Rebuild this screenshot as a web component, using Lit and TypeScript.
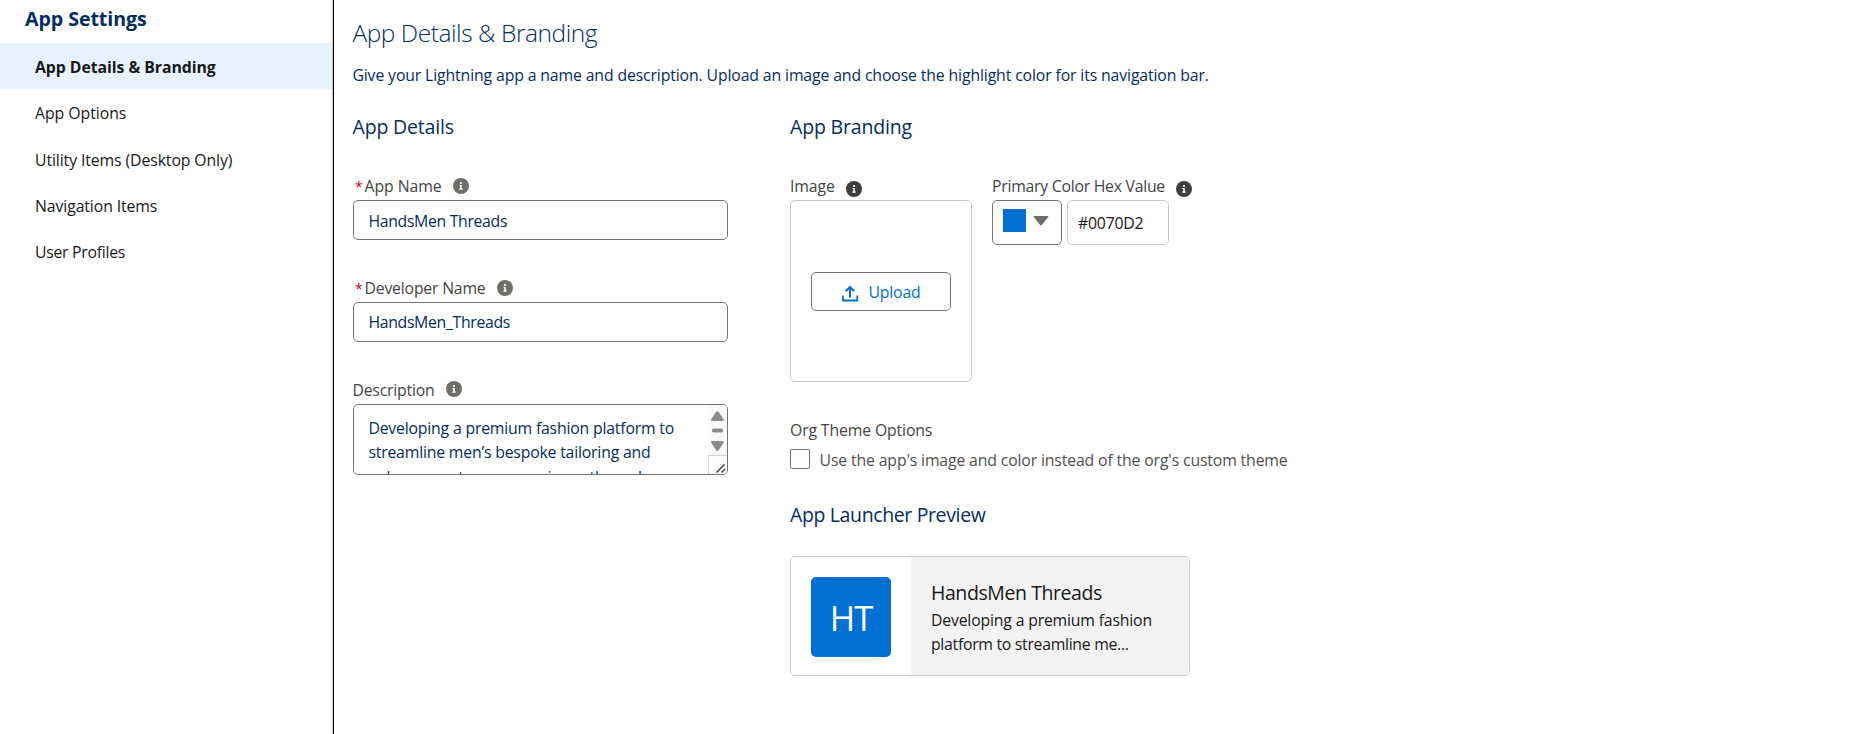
import { LitElement, html, css } from "lit";
import { customElement, property, state } from "lit/decorators.js";
import { classMap } from "lit/directives/class-map.js";

@customElement("info-icon")
class InfoIcon extends LitElement {
  static styles = css`
    :host { display: block; width: 16px; height: 16px; color: #706e6b; }
    svg { display: block; width: 16px; height: 16px; }
  `;
  render() {
    return html`<svg viewBox="0 0 16 16">
      <circle cx="8" cy="8" r="8" fill="currentColor"></circle>
      <circle cx="8" cy="5" r="1.1" fill="#fff"></circle>
      <path d="M6.4 7h2.400v3.600h.9v1.100H6.300v-1.100h.9V8h-.8z" fill="#fff"></path>
    </svg>`;
  }
}

@customElement("settings-nav")
class SettingsNav extends LitElement {
  @property({ type: Number }) active = 0;

  private items = [
    { label: "App Details & Branding", fit: "" },
    { label: "App Options", fit: "" },
    { label: "Utility Items (Desktop Only)", fit: "snug" },
    { label: "Navigation Items", fit: "snug" },
    { label: "User Profiles", fit: "tight" },
  ];

  static styles = css`
    :host { display: block; }
    h1 {
      margin: 0; height: 43px; padding-left: 25px; box-sizing: border-box;
      font-size: 19.6px; line-height: 38px; font-weight: 700; letter-spacing: -0.06px; color: #032d60;
    }
    ul { list-style: none; margin: 0; padding: 0; }
    li {
      height: 46.25px; line-height: 49px; padding-left: 35px;
      font-size: 15.8px; letter-spacing: -0.04px; color: #181818; white-space: nowrap;
    }
    .snug { letter-spacing: -0.1px; }
    .tight { letter-spacing: -0.28px; }
    .active { background: #e6f3fe; font-weight: 700; letter-spacing: -0.05px; }
  `;
  render() {
    return html`
      <h1>App Settings</h1>
      <ul>
        ${this.items.map((it, i) => html`
          <li class=${classMap({ active: i === this.active, snug: it.fit === "snug", tight: it.fit === "tight" })}>${it.label}</li>`)}
      </ul>`;
  }
}

@customElement("details-form")
class DetailsForm extends LitElement {
  static styles = css`
    :host { display: block; width: 375px; }
    .label {
      display: flex; height: 25px; line-height: 23px; color: #444; letter-spacing: -0.2px; white-space: nowrap;
    }
    .label.wide { letter-spacing: -0.07px; }
    .req { width: 11.5px; padding-left: 2px; box-sizing: border-box; color: #c2001b; font-size: 14px; }
    info-icon { margin: 3px 0 0 11.5px; }
    .label.desc { text-indent: -0.6px; }
    .label.desc info-icon { margin: 2px 0 0 11px; }
    .field {
      height: 40px; box-sizing: border-box; border: 1px solid #747474; border-radius: 5px;
      padding-left: 14.4px; line-height: 41px; color: #032d60; letter-spacing: -0.32px;
      margin-bottom: 37px;
    }
    .field.dev { line-height: 38px; }
    .area {
      display: flex; justify-content: space-between; height: 71px; box-sizing: border-box;
      border: 1px solid #747474; border-radius: 5px; overflow: hidden;
    }
    .copy {
      padding: 11px 0 0 14.4px; line-height: 24.375px; color: #032d60; letter-spacing: -0.19px; white-space: nowrap;
    }
    .copy div { height: 24.375px; }
    .bar { width: 19px; background: #fafafa; }
    .bar svg { display: block; width: 19px; height: 69px; }
  `;
  render() {
    return html`
      <div class="label wide"><span class="req">*</span>App Name<info-icon></info-icon></div>
      <div class="field">HandsMen Threads</div>
      <div class="label"><span class="req">*</span>Developer Name<info-icon></info-icon></div>
      <div class="field dev">HandsMen_Threads</div>
      <div class="label desc">Description<info-icon></info-icon></div>
      <div class="area">
        <div class="copy">
          <div>Developing a premium fashion platform to</div>
          <div>streamline men’s bespoke tailoring and</div>
          <div>enhance customer experience through</div>
        </div>
        <div class="bar">
          <svg viewBox="0 0 19 69">
            <path d="M8.200 6.800a1.700 1.700 0 0 1 2.400 0l5 7.400q.8 1.600-.8 1.800H4q-1.600-.2-.8-1.800z" fill="#8b8b8b"></path>
            <rect x="4" y="23.500" width="11" height="4" rx="1.800" fill="#8b8b8b"></rect>
            <path d="M8.200 45.200a1.700 1.700 0 0 0 2.400 0l5-7.400q.8-1.600-.8-1.800H4q-1.600.2-.8 1.800z" fill="#8b8b8b"></path>
            <path d="M.5 69V50.500H19" fill="#fff" stroke="#d0d0d0"></path>
            <path d="M8.500 67.500l8-8M13.500 67.500l3.500-3.500" stroke="#444" stroke-width="1.600" fill="none"></path>
          </svg>
        </div>
      </div>`;
  }
}

@customElement("branding-form")
class BrandingForm extends LitElement {
  @property() color = "#0070D2";

  static styles = css`
    :host { display: block; }
    .pair { display: flex; gap: 20px; }
    .label { display: flex; height: 25px; line-height: 23px; color: #444; letter-spacing: -0.1px; white-space: nowrap; }
    .label.tight { letter-spacing: -0.26px; }
    info-icon { color: #3e3e3c; margin: 5.5px 0 0 11px; }
    .drop {
      width: 182px; height: 182px; box-sizing: border-box; border: 1px solid #c9c9c9; border-radius: 5px;
      display: flex; align-items: center; justify-content: center;
    }
    .upload {
      width: 140px; height: 39px; box-sizing: border-box; border: 1px solid #747474; border-radius: 5px;
      display: flex; align-items: center; justify-content: center; gap: 10px; color: #0070d2; letter-spacing: -0.19px;
    }
    .upload svg { width: 17px; height: 17px; display: block; margin-top: 5px; }
    .upload span { padding-top: 2px; }
    .picker { display: flex; gap: 5px; }
    .swatch-btn {
      width: 70px; height: 45px; box-sizing: border-box; border: 1px solid #747474; border-radius: 5px;
      display: flex; padding: 8px 0 0 10px;
    }
    .swatch { width: 23px; height: 23px; }
    .arrow { width: 16px; height: 10px; margin: 7px 0 0 7px; }
    .hex {
      width: 102px; height: 45px; box-sizing: border-box; border: 1px solid #c9c9c9; border-radius: 5px;
      padding-left: 10px; line-height: 45px; color: #181818; letter-spacing: -0.2px;
    }
    .theme { margin-top: 35px; height: 32px; line-height: 26px; color: #444; letter-spacing: -0.14px; }
    .check { display: flex; height: 20px; gap: 9.6px; color: #514f4d; letter-spacing: -0.147px; line-height: 23px; white-space: nowrap; }
    .box { width: 20px; height: 20px; box-sizing: border-box; border: 1px solid #747474; border-radius: 2px; }
  `;
  render() {
    return html`
      <div class="pair">
        <div>
          <div class="label">Image<info-icon></info-icon></div>
          <div class="drop">
            <div class="upload">
              <svg viewBox="0 0 17 17" fill="none" stroke="currentColor">
                <path d="M8 12.500V2.500M3.800 6.200L8 2l4.200 4.200" stroke-width="2"></path>
                <path d="M1 10.500v5h14.300v-5" stroke-width="1.800"></path>
              </svg>
              <span>Upload</span>
            </div>
          </div>
        </div>
        <div>
          <div class="label tight">Primary Color Hex Value<info-icon></info-icon></div>
          <div class="picker">
            <div class="swatch-btn">
              <div class="swatch" style="background:${this.color}"></div>
              <svg class="arrow" viewBox="0 0 16 10"><path d="M1.200 0h13.600q1 .2.4 1.100L8.700 9.200q-.7.7-1.400 0L.8 1.100Q.2.2 1.200 0z" fill="#706e6b"></path></svg>
            </div>
            <div class="hex">${this.color}</div>
          </div>
        </div>
      </div>
      <div class="theme">Org Theme Options</div>
      <div class="check"><span class="box"></span><span>Use the app's image and color instead of the org's custom theme</span></div>`;
  }
}

@customElement("launcher-card")
class LauncherCard extends LitElement {
  static styles = css`
    :host {
      display: flex; width: 400px; height: 120px; box-sizing: border-box;
      border: 1px solid #c9c9c9; border-radius: 5px; overflow: hidden;
    }
    .logo { width: 120px; padding: 20px; box-sizing: border-box; }
    .tile {
      width: 80px; height: 80px; border-radius: 5px; background: #0070d2; color: #fff;
      font-size: 34.5px; line-height: 81px; text-align: center; letter-spacing: -1px;
    }
    .text { flex: 1; background: #f3f3f3; padding: 21px 0 0 20px; color: #181818; white-space: nowrap; }
    .name { font-size: 19.5px; line-height: 30px; letter-spacing: -0.42px; }
    .line { line-height: 24.375px; letter-spacing: -0.18px; }
    .line.tight { letter-spacing: -0.29px; }
  `;
  render() {
    return html`
      <div class="logo"><div class="tile">HT</div></div>
      <div class="text">
        <div class="name">HandsMen Threads</div>
        <div class="line">Developing a premium fashion</div>
        <div class="line tight">platform to streamline me...</div>
      </div>`;
  }
}

@customElement("app-root")
class AppRoot extends LitElement {
  @state() private active = 0;

  static styles = css`
    :host {
      display: flex; height: 734px; overflow: hidden; background: #fff;
      font-family: "Open Sans", "Noto Sans", sans-serif; font-size: 15.8px; color: #032d60;
    }
    .side { width: 334px; flex: none; box-sizing: border-box; border-right: 1px solid #000; }
    .side settings-nav { border-right: 1px solid #c4c4c4; height: 734px; }
    main { flex: 1; padding: 18px 0 0 19px; }
    .title { margin: 0; font-size: 24.5px; font-weight: 300; line-height: 30px; letter-spacing: -0.45px; text-indent: -0.6px; }
    .intro { margin: 15px 0 0; line-height: 24px; letter-spacing: -0.13px; text-indent: -0.6px; }
    .cols { display: flex; gap: 62px; margin-top: 25px; }
    .left { width: 375px; }
    h3 { margin: 0 0 33px; font-size: 19.5px; font-weight: 400; line-height: 30px; letter-spacing: -0.17px; }
    .left h3 { text-indent: -0.5px; }
    .preview { margin: 31px 0 26px; letter-spacing: -0.37px; }
  `;
  render() {
    return html`
      <div class="side"><settings-nav .active=${this.active}></settings-nav></div>
      <main>
        <h2 class="title">App Details &amp; Branding</h2>
        <p class="intro">Give your Lightning app a name and description. Upload an image and choose the highlight color for its navigation bar.</p>
        <div class="cols">
          <section class="left">
            <h3>App Details</h3>
            <details-form></details-form>
          </section>
          <section>
            <h3>App Branding</h3>
            <branding-form></branding-form>
            <h3 class="preview">App Launcher Preview</h3>
            <launcher-card></launcher-card>
          </section>
        </div>
      </main>`;
  }
}
